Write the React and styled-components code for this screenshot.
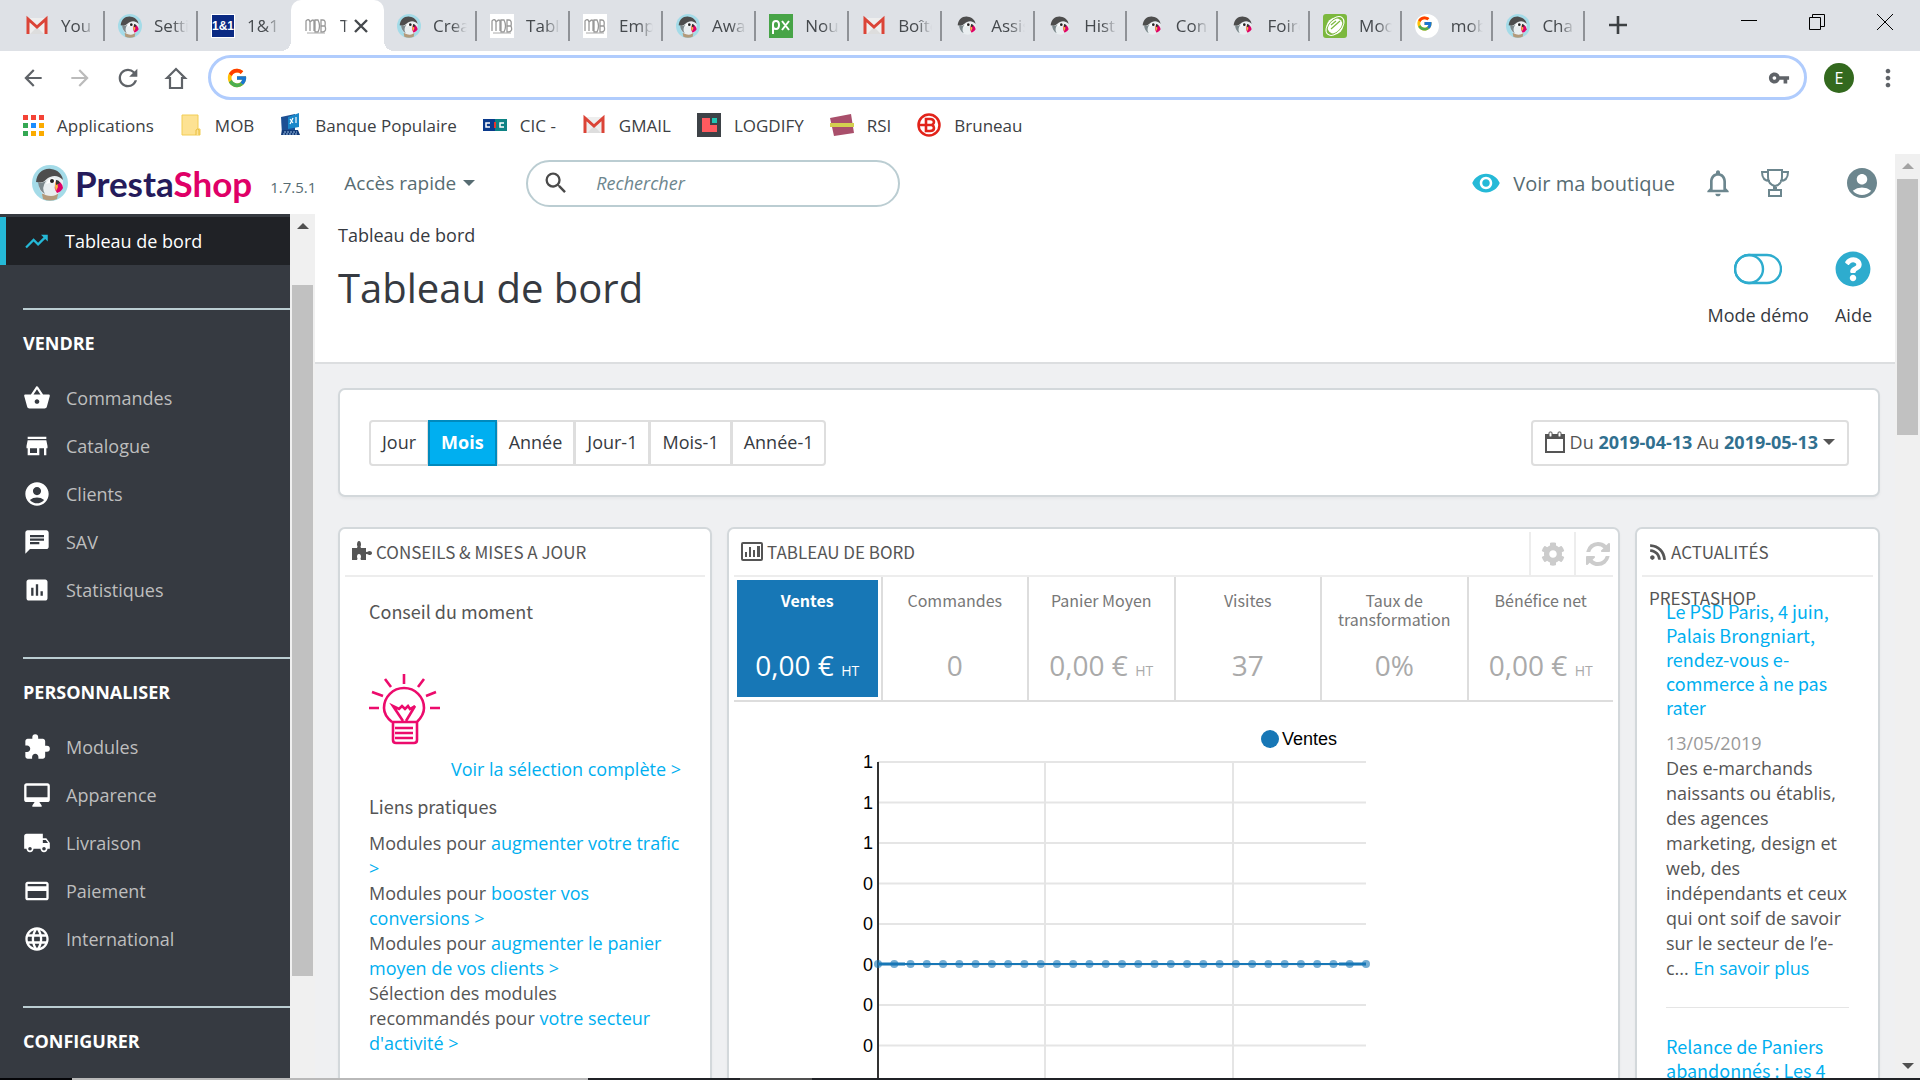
import React from 'react';
import styled, { createGlobalStyle, css } from 'styled-components';
import {
  MdTrendingUp, MdShoppingBasket, MdStore, MdAccountCircle, MdChat, MdAssessment,
  MdExtension, MdLocalShipping, MdPayment, MdLanguage, MdVisibility,
  MdNotificationsNone, MdVpnKey, MdSearch, MdArrowBack, MdArrowForward, MdRefresh, MdMoreVert,
} from 'react-icons/md';
import { FaQuestionCircle, FaCog, FaRss } from 'react-icons/fa';
import { FcGoogle } from 'react-icons/fc';

const sans = '"Open Sans", "Noto Sans", sans-serif';
const condensed = '"Ubuntu Condensed", "Noto Sans CJK SC", sans-serif';

const GlobalStyle = createGlobalStyle`
  * { box-sizing: border-box; }

  body {
    margin: 0;
    font-family: ${sans};
    font-size: 17px;
    color: #363a41;
    background: #fff;
  }

  button, input { font-family: inherit; font-size: inherit; color: inherit; }

  button {
    background: none;
    border: 0;
    padding: 0;
    cursor: pointer;
  }

  a { color: #00aff0; text-decoration: none; }

  h1, h2, h3, p, ul { margin: 0; padding: 0; font-weight: normal; }

  ul { list-style: none; }

  svg { display: block; flex: none; }
`;

const Shell = styled.div`
  height: 100vh;
  display: flex;
  flex-direction: column;
  overflow: hidden;
`;

/* browser window */

const TabStrip = styled.div`
  display: flex;
  height: 51px;
  flex: none;
  padding-left: 12px;
  background: #dee1e6;
`;

const Tabs = styled.div`
  flex: 1;
  min-width: 0;
  display: flex;
`;

const Tab = styled.button`
  position: relative;
  flex: 50 1 0;
  min-width: 0;
  display: flex;
  align-items: center;
  gap: 12px;
  padding: 0 10px 0 13px;
  color: #45494d;

  &:nth-child(-n + 11) { flex-grow: 51; }

  &::after {
    content: '';
    position: absolute;
    right: 0;
    top: 11px;
    width: 2px;
    height: 30px;
    background: #8f9297;
    display: ${p => (p.$quiet ? 'none' : 'block')};
  }

  ${p => p.$active && css`
    background: #fff;
    border-radius: 10px 10px 0 0;

    &::before, &::after {
      content: '';
      display: block;
      position: absolute;
      top: auto;
      bottom: 0;
      width: 10px;
      height: 10px;
    }

    &::before {
      left: -10px;
      background: radial-gradient(circle at 0 0, #dee1e6 10px, #fff 10px);
    }

    &::after {
      right: -10px;
      background: radial-gradient(circle at 100% 0, #dee1e6 10px, #fff 10px);
    }
  `}
`;

const TabTitle = styled.span`
  flex: 1;
  min-width: 0;
  overflow: hidden;
  white-space: nowrap;
  text-align: left;
  mask-image: linear-gradient(to right, #000 55%, transparent);
`;

const CloseIcon = styled.svg`
  margin: 0 6px 0 -6px;
`;

const WindowButtons = styled.div`
  width: 335px;
  flex: none;
  display: flex;
  justify-content: space-between;
  align-items: flex-start;
  padding: 14px 27px 0 22px;
  color: #3c4043;
`;

const WindowControls = styled.div`
  display: flex;
  gap: 52px;
`;

const Toolbar = styled.div`
  flex: none;
  height: 53px;
  display: flex;
  align-items: center;
  padding: 4px 18px 4px 20px;
  color: #5f6368;
`;

const NavButtons = styled.div`
  display: flex;
  gap: 21px;
  margin-right: 19px;
`;

const Omnibox = styled.label`
  flex: 1;
  height: 45px;
  display: flex;
  align-items: center;
  padding: 0 14px 0 15px;
  border: 3px solid #b0ccfd;
  border-radius: 23px;

  input {
    flex: 1;
    border: 0;
    outline: 0;
    background: none;
  }
`;

const Profile = styled.button`
  width: 30px;
  height: 30px;
  margin: 0 20px 0 17px;
  border-radius: 50%;
  background: #33691e;
  color: #fff;
  font-size: 16px;
`;

const Bookmarks = styled.nav`
  flex: none;
  height: 50px;
  display: flex;
  align-items: center;
  gap: 26px;
  padding: 0 22px 8px;

  a {
    display: flex;
    align-items: center;
    gap: 13px;
    font-size: 17px;
    color: #3c4043;
  }
`;

const Viewport = styled.div`
  flex: 1;
  min-height: 0;
  display: flex;
`;

const Page = styled.div`
  flex: 1;
  min-width: 0;
  display: flex;
  flex-direction: column;
`;

const Track = styled.div`
  width: 25px;
  flex: none;
  display: flex;
  flex-direction: column;
  align-items: center;
  background: #f0f0f0;
`;

const Arrow = styled.i`
  margin: 9px 0;
  border: 6px solid transparent;
  border-top-width: 0;
  border-bottom-color: ${p => (p.$muted ? '#a3a3a3' : '#505050')};

  ${p => p.$down && css`
    margin-top: auto;
    border-width: 6px 6px 0;
    border-color: #505050 transparent transparent;
  `}
`;

const Thumb = styled.div`
  width: 21px;
  height: ${p => p.$height};
  margin-top: ${p => p.$top}px;
  background: #c1c1c1;
`;

const Taskbar = styled.div`
  flex: none;
  height: 2px;
  background: linear-gradient(to right, #050508 72px, #b9b9b9 72px 588px, #202226 588px 740px, #505050 740px 812px, #202226 812px);
`;

/* back office header */

const Header = styled.header`
  flex: none;
  height: 60px;
  display: flex;
  align-items: center;
  padding: 0 15px 2px 32px;
  color: #576c72;
  font-size: 18px;
`;

const Logo = styled.a`
  display: flex;
  align-items: center;
  gap: 7px;
  font: bold 35px/40px Lato, sans-serif;
  color: #251b5b;

  em {
    font-style: normal;
    color: #df0067;
  }
`;

const Version = styled.span`
  margin: 8px 28px 0 18px;
  font-size: 15px;
`;

const QuickAccess = styled.button`
  display: flex;
  align-items: center;
  gap: 7px;
  margin-right: 51px;
  font-size: 19px;
`;

const Caret = styled.i`
  border: 6px solid transparent;
  border-top-color: currentColor;
  border-bottom: 0;
`;

const Search = styled.label`
  width: 374px;
  height: 47px;
  display: flex;
  align-items: center;
  gap: 24px;
  padding: 0 14px;
  border: 2px solid #bbcdd2;
  border-radius: 24px;
  color: #4a4a4a;

  input {
    flex: 1;
    min-width: 0;
    border: 0;
    outline: 0;
    background: none;
    font-size: 18px;
    font-style: italic;
  }

  input::placeholder { color: #6c868e; opacity: 1; }
`;

const HeaderActions = styled.div`
  margin-left: auto;
  display: flex;
  align-items: center;
  color: #6c868e;

  a {
    display: flex;
    align-items: center;
    gap: 12px;
    margin-right: 27px;
    font-size: 20px;
    color: #576c72;
  }
`;

const ActionButton = styled.button`
  margin-right: ${p => p.$space || 0}px;
`;

/* sidebar */

const Body = styled.div`
  flex: 1;
  min-height: 0;
  display: flex;
`;

const Sidebar = styled.nav`
  width: 290px;
  flex: none;
  overflow: hidden;
  padding-top: 3px;
  background: #363a41;
`;

const MenuGroup = styled.div`
  margin-top: 43px;

  h2 {
    margin-left: 23px;
    padding: 21px 0 19px;
    border-top: 2px solid #bbcdd2;
    font-size: 18px;
    line-height: 24px;
    font-weight: bold;
    color: #fff;
    white-space: nowrap;
  }
`;

const MenuLink = styled.a`
  display: flex;
  align-items: center;
  gap: 15px;
  height: 48px;
  padding-left: 23px;
  font-size: 18px;
  color: #bebebe;

  svg { color: #fff; }

  ${p => p.$active && css`
    border-left: 6px solid #25b9d7;
    padding-left: 17px;
    background: #202226;
    color: #fff;

    svg { color: #25b9d7; }
  `}
`;

/* content */

const Main = styled.main`
  flex: 1;
  min-width: 0;
  display: flex;
  flex-direction: column;
  overflow: hidden;
  background: #eff0f2;
`;

const PageHead = styled.div`
  flex: none;
  height: 150px;
  display: flex;
  justify-content: space-between;
  padding: 9px 23px 0 23px;
  background: #fff;
  border-bottom: 2px solid #dcdee0;

  nav {
    font-size: 18px;
    line-height: 24px;
  }

  h1 {
    margin-top: 14px;
    font-size: 40px;
    line-height: 54px;
  }
`;

const HeadButtons = styled.div`
  display: flex;
  align-items: flex-start;
  gap: 26px;
  padding-top: 28px;
`;

const HeadButton = styled.button`
  display: flex;
  flex-direction: column;
  align-items: center;
  gap: 16px;
  font-size: 18px;
  line-height: 24px;

  svg { color: #2eacce; }
`;

const Content = styled.div`
  flex: 1;
  min-height: 0;
  padding: 24px 15px 0 23px;
`;

const Card = styled.section`
  background: #fff;
  border: 2px solid #d3d8db;
  border-radius: 7px;
  box-shadow: 0 2px 3px rgba(0, 0, 0, 0.04);
`;

const FilterCard = styled(Card)`
  display: flex;
  justify-content: space-between;
  padding: 30px 29px 29px;
  margin-bottom: 30px;
`;

const Periods = styled.div`
  display: flex;
`;

const Period = styled.button`
  height: 46px;
  padding: 0 11px 2px;
  border: 2px solid #dedede;
  margin-left: -1px;
  font-size: 18px;
  color: #363a41;

  &:first-child { margin-left: 0; border-radius: 4px 0 0 4px; }
  &:last-child { border-radius: 0 4px 4px 0; }

  ${p => p.$active && css`
    position: relative;
    background: #00aff0;
    border-color: #008abd;
    color: #fff;
    font-weight: bold;
  `}
`;

const DateButton = styled.button`
  display: flex;
  align-items: center;
  gap: 5px;
  height: 46px;
  padding: 0 12px 2px;
  border: 2px solid #dedede;
  border-radius: 4px;
  font-size: 18px;
  color: #555;
  white-space: nowrap;

  strong { font-weight: bold; color: #31708f; }
`;

const Columns = styled.div`
  display: grid;
  grid-template-columns: 374fr 893fr 245fr;
  gap: 15px;
`;

const Panel = styled(Card)`
  min-width: 0;
  height: 640px;
  padding: 0 5px;
  overflow: hidden;
`;

const PanelHeading = styled.h3`
  display: flex;
  justify-content: space-between;
  height: 48px;
  border-bottom: 2px solid #ededed;
  padding-left: 7px;
  font-family: ${condensed};
  font-size: 17px;
  line-height: 46px;
  color: #555;
  white-space: nowrap;
`;

const HeadingText = styled.span`
  svg {
    display: inline-block;
    margin-right: 4px;
    vertical-align: -2px;
  }
`;

const PanelTools = styled.span`
  display: flex;
  margin-top: 3px;

  button {
    width: 45px;
    height: 43px;
    padding-left: 10px;
    border-left: 2px solid #ededed;
    color: #ccc;
  }

  button:last-child { width: 39px; }
`;

const Tips = styled.div`
  padding: 22px 24px;
  font-size: 18px;
  line-height: 25px;
  color: #555;

  h3 {
    font-family: ${condensed};
    font-size: 18px;
    line-height: 24px;
  }

  > svg { margin: 51px 0 12px; }

  ul { margin-top: 13px; }
`;

const SeeAll = styled.p`
  margin-bottom: 12px;
  text-align: right;
`;

const Kpis = styled.div`
  display: grid;
  grid-template-columns: repeat(6, 1fr);
  border-bottom: 2px solid #ddd;
`;

const Kpi = styled.button`
  height: 123px;
  display: flex;
  flex-direction: column;
  justify-content: space-between;
  align-items: center;
  padding: 14px 8px 16px;
  border-left: 2px solid #ddd;
  color: #777;

  span {
    font-family: ${condensed};
    font-size: 16px;
    line-height: 19px;
  }

  b {
    font-size: 28px;
    line-height: 38px;
    font-weight: normal;
    color: #aaa;
    white-space: nowrap;
  }

  small { font-size: 14px; line-height: 14px; }

  ${p => p.$active && css`
    background: #1777b6;
    border: 3px solid #fff;
    padding: 11px 4px 13px;
    color: #fff;

    span { font-weight: bold; }
    b { color: #fff; }
  `}
`;

const News = styled.div`
  padding: 22px 24px;
  font-size: 18px;
  line-height: 25px;
  color: #555;

  h3 {
    font-family: ${condensed};
    font-size: 18px;
    line-height: 24px;
    margin-bottom: 12px;
  }

  time { display: block; color: #999; }

  hr {
    margin: 26px 0;
    border: 0;
    border-top: 1px solid #e5e5e5;
  }
`;

const Puffin = ({ size = 24, round }) => (
  <svg width={size} height={size} viewBox="0 0 36 36">
    {round && <circle cx="18" cy="18" r="18" fill="#a4dbe8" />}
    {round && <path d="M10 29q8-5 16 0l-1 5q-7 3-14 0z" fill="#b39a7b" />}
    <path d="M7 20C7 10 12 5 19 5s12 5 12 12c0 8-5 14-12 14S7 27 7 20z" fill="#e9eef0" />
    <path d="M4 17C5 8 11 3 19 4c7 1 11 5 12 11-4-4-8-5-13-3-3 1-5 4-7 5-3 1-5 0-7 0z" fill="#4d4d4d" />
    <path d="M6 17q3 2 8-1-5 7-1 13-6-3-7-12z" fill="#7d898d" />
    <path d="M14 19q2-6 8-6l2 5q-5-1-10 1z" fill="#fff" />
    <circle cx="20" cy="16" r="2" fill="#222" />
    <path d="M24 16q6 0 7 7-2 4-6 5-4-5-1-12z" fill="#df0067" />
    <path d="M24 16q-2 5 0 10l2-4-1-6z" fill="#f5b942" />
    <path d="M24 15q3 0 4 3l-4 2z" fill="#333" />
  </svg>
);

const Gmail = () => (
  <svg width="24" height="24" viewBox="0 0 24 24">
    <path d="M2 4h20v16H2z" fill="#eee" />
    <path d="M5 20l7-7 7 7z" fill="#ddd" />
    <path d="M3 20V5l9 8 9-8v15" fill="none" stroke="#db4437" strokeWidth="3" />
  </svg>
);

const OneAndOne = () => (
  <svg width="24" height="24" viewBox="0 0 24 24">
    <path d="M0 0h24v24H0z" fill="#fff" />
    <path d="M1 1h22v22H1z" fill="#0b2a83" />
    <text x="12" y="16" fontSize="12" fontWeight="bold" fontFamily="Liberation Sans" textAnchor="middle" fill="#fff">1&amp;1</text>
  </svg>
);

const Mob = ({ plain }) => (
  <svg width="24" height="24" viewBox="0 0 24 24">
    {!plain && <path d="M0 0h24v24H0z" fill="#fff" />}
    <path d="M2 17V7q3-3 4 1v9m0-9q4-4 4 0v9M11 6v12h3q3-6 0-12zM17 6v12h2q4-1 2-6 1-6-2-6zm0 6h4" fill="none" stroke="#999" strokeWidth="1.3" />
    <path d="M3 19h18" stroke="#aaa" />
  </svg>
);

const Px = () => (
  <svg width="24" height="24" viewBox="0 0 24 24">
    <path d="M0 0h24v24H0z" fill="#47a447" />
    <path d="M4 20V10q0-3 3-3t3 4-3 4q-3 0-3-3M13 7l7 9m0-9l-7 9" fill="none" stroke="#fff" strokeWidth="2" />
  </svg>
);

const Planet = () => (
  <svg width="24" height="24" viewBox="0 0 24 24">
    <rect width="24" height="24" rx="3" fill="#7cb83e" />
    <circle cx="12" cy="12" r="8" fill="#fff" />
    <path d="M8 15l9-8M8 11l5-4" fill="none" stroke="#7cb83e" strokeWidth="1.2" />
    <ellipse cx="12" cy="12" rx="10" ry="6" transform="rotate(-48 12 12)" fill="none" stroke="#7cb83e" />
    <ellipse cx="12" cy="12" rx="11" ry="7" transform="rotate(-48 12 12)" fill="none" stroke="#fff" />
  </svg>
);

const GoogleTab = () => (
  <svg width="24" height="24" viewBox="0 0 24 24">
    <circle cx="12" cy="12" r="12" fill="#fff" />
    <FcGoogle x="1" y="1" width="22" height="22" />
  </svg>
);

const AppsIcon = () => {
  const colors = ['#f44336', '#f44336', '#f44336', '#34a853', '#1a8cff', '#fbab00', '#34a853', '#fbab00', '#fbab00'];
  return (
    <svg width="22" height="22" viewBox="0 0 22 22">
      {colors.map((color, i) => (
        <rect key={i} x={1 + (i % 3) * 8} y={1 + Math.floor(i / 3) * 8} width="5" height="5" fill={color} />
      ))}
    </svg>
  );
};

const FolderIcon = () => (
  <svg width="22" height="22" viewBox="0 0 22 22">
    <path d="M2 1h16v14h2v6H2z" fill="#fde293" stroke="#f2cd54" />
    <path d="M16 21v-5q2-2 3 0v5" fill="#fde293" stroke="#e8bd3d" />
  </svg>
);

const BankIcon = () => (
  <svg width="22" height="24" viewBox="0 0 22 24">
    <path d="M1 4l14-3v20l-13 1z" fill="#1c4f93" />
    <path d="M8 4l11-4v14l-11 2z" fill="#1b87c9" />
    <path d="M10 6l3 4M13 5l-3 6M16 4v6" stroke="#fff" strokeWidth="1.2" />
    <path d="M2 17h16l2 5H1z" fill="#113a78" />
    <path d="M4 19h13M3 21h15" stroke="#9fc0e4" strokeDasharray="2 1" />
  </svg>
);

const CicIcon = () => (
  <svg width="24" height="12" viewBox="0 0 24 12">
    <path d="M0 0h12v12H0z" fill="#0a3a8c" />
    <path d="M12 0h12v12H12z" fill="#0e8284" />
    <path d="M7 4H3v4h4M21 4h-4v4h4" fill="none" stroke="#fff" strokeWidth="1.5" />
    <path d="M11 3h2v6h-2z" fill="#e5352c" />
  </svg>
);

const LogdifyIcon = () => (
  <svg width="24" height="24" viewBox="0 0 24 24">
    <path d="M0 0h24v24H0z" fill="#3d4247" />
    <path d="M5 5h8v7h7v7H5z" fill="#ff5a5f" />
    <path d="M15 5h5v5h-5z" fill="#1fc8b4" />
  </svg>
);

const RsiIcon = () => (
  <svg width="24" height="22" viewBox="0 0 24 22">
    <path d="M0 4l21-4 3 19-20 3z" fill="#a94f6b" />
    <path d="M0 9h24v4H0z" fill="#d3d04f" />
  </svg>
);

const BruneauIcon = () => (
  <svg width="24" height="24" viewBox="0 0 24 24">
    <circle cx="12" cy="12" r="10.5" fill="none" stroke="#e2231a" strokeWidth="2.5" />
    <path d="M1 12h8M9 6v12h4q4 0 4-3 0-2-2-3 2-1 2-3 0-3-4-3zM9 12h6" fill="none" stroke="#e2231a" strokeWidth="2.6" />
  </svg>
);

const HomeIcon = () => (
  <svg width="26" height="26" viewBox="0 0 26 26">
    <path d="M4 13L13 4l9 9h-3v10H7V13z" fill="none" stroke="#5f6368" strokeWidth="2.2" />
  </svg>
);

const DesktopIcon = ({ size }) => (
  <svg width={size} height={size} viewBox="0 0 24 24" fill="currentColor">
    <path d="M21 2H3c-1.100 0-2 .9-2 2v12c0 1.100.9 2 2 2h7l-2 3v1h8v-1l-2-3h7c1.100 0 2-.9 2-2V4c0-1.100-.9-2-2-2zm0 12H3V4h18v10z" />
  </svg>
);

const TrophyIcon = () => (
  <svg width="28" height="28" viewBox="0 0 28 28" fill="none" stroke="#6c868e" strokeWidth="2">
    <path d="M7 1h14v7c0 5-3 8-7 9-4-1-7-4-7-9zM7 3H1c0 6 3 9 8 9M21 3h6c0 6-3 9-8 9M13 17v5M15 17v5M8 21h12v6H8z" />
  </svg>
);

const ToggleIcon = () => (
  <svg width="48" height="36" viewBox="0 0 48 36" fill="none" stroke="#2eacce" strokeWidth="2.4">
    <rect x="1" y="4" width="46" height="28" rx="14" />
    <circle cx="15" cy="18" r="14" />
  </svg>
);

const PuzzleIcon = () => (
  <svg width="20" height="20" viewBox="0 0 20 20" fill="#555">
    <path d="M0 7h5q1-1 0-3 0-4 2-4t2 4q-1 2 0 3h5v4q2 0 3-1 3 0 3 2t-3 2q-1-1-3-1v6h-5q-1-1 0-3 0-3-2-3t-2 3q1 2 0 3H0z" />
  </svg>
);

const BarsIcon = () => (
  <svg width="22" height="19" viewBox="0 0 22 19">
    <rect x="1" y="1" width="20" height="17" rx="1" fill="none" stroke="#555" strokeWidth="2" />
    <path d="M4 10h2v5H4zM8 5h2v10H8zM12 8h2v7h-2zM16 4h3v11h-3z" fill="#555" />
  </svg>
);

const CalendarIcon = () => (
  <svg width="20" height="22" viewBox="0 0 20 22">
    <path d="M1 5h18v16H1z" fill="none" stroke="#555" strokeWidth="2" />
    <path d="M0 3h20v5H0z" fill="#555" />
    <rect x="4" y="1" width="3" height="5" rx="1" fill="#fff" stroke="#555" />
    <rect x="13" y="1" width="3" height="5" rx="1" fill="#fff" stroke="#555" />
  </svg>
);

const RefreshIcon = () => (
  <svg width="24" height="24" viewBox="0 0 1536 1536" fill="currentColor">
    <path d="M1511 928q0 5-1 7-64 268-268 434.500t-478 166.500q-146 0-282.500-55t-243.500-157l-129 129q-19 19-45 19t-45-19-19-45v-448q0-26 19-45t45-19h448q26 0 45 19t19 45-19 45l-137 137q71 66 161 102t187 36q134 0 250-65t186-179q11-17 53-117 8-23 30-23h192q13 0 22.500 9.500t9.500 22.500zm25-800v448q0 26-19 45t-45 19h-448q-26 0-45-19t-19-45 19-45l138-138q-148-137-349-137-134 0-250 65t-186 179q-11 17-53 117-8 23-30 23h-199q-13 0-22.500-9.500t-9.500-22.500v-7q65-268 270-434.500t480-166.500q146 0 284 55.500t245 156.500l130-129q19-19 45-19t45 19 19 45z" />
  </svg>
);

const BulbIcon = () => (
  <svg width="71" height="71" viewBox="0 0 71 71" fill="none" stroke="#ec0b6c" strokeWidth="2.6">
    <path d="M23 48c-5-4-8-8-8-14a20 20 0 0 1 40 0c0 6-3 10-7 14M24 48h24v18q0 3-3 3H27q-3 0-3-3z" />
    <path d="M26 54h18M26 59h18M26 64h18" />
    <path d="M34 47L24 32l6 3 3-3 3 3 3-3 2 3 5-3-9 15" />
    <path d="M35 0v10M16 5l6 8M55 5l-6 8M3 18l11 4M67 18l-10 4M0 34h10M61 34h10" />
  </svg>
);

const yLabels = ['1', '1', '1', '0', '0', '0', '0', '0'];

const Chart = () => (
  <svg width="640" height="378" viewBox="0 0 640 378" fontFamily="Liberation Sans" fontSize="18">
    <circle cx="536" cy="37" r="9" fill="#1777b6" />
    <text x="548" y="43">Ventes</text>
    {yLabels.map((label, i) => (
      <g key={i}>
        <path d={`M144 ${60 + i * 40.5}h488`} stroke="#e5e5e5" strokeWidth="2" />
        <text x="139" y={66 + i * 40.5} textAnchor="end">{label}</text>
      </g>
    ))}
    <path d="M311 60v318M499 60v318" stroke="#e5e5e5" strokeWidth="2" />
    <path d="M144 60v318" stroke="#333" strokeWidth="2" />
    <path d="M144 262h488" stroke="#1777b6" strokeWidth="2" />
    <path d="M144 262h27M605 262h27" stroke="#1777b6" strokeWidth="3" />
    {Array.from({ length: 31 }, (_, i) => (
      <circle key={i} cx={144 + (i * 488) / 30} cy="262" r="4" fill="#1777b6" fillOpacity="0.6" />
    ))}
  </svg>
);

const tabs = [
  { title: 'You', icon: <Gmail /> },
  { title: 'Setti', icon: <Puffin round /> },
  { title: '1&1', icon: <OneAndOne />, quiet: true },
  { title: 'T', icon: <Mob plain />, active: true },
  { title: 'Crea', icon: <Puffin round /> },
  { title: 'Table', icon: <Mob /> },
  { title: 'Emp', icon: <Mob /> },
  { title: 'Awa', icon: <Puffin round /> },
  { title: 'Nou', icon: <Px /> },
  { title: 'Boîte', icon: <Gmail /> },
  { title: 'Assis', icon: <Puffin /> },
  { title: 'Hist', icon: <Puffin /> },
  { title: 'Con', icon: <Puffin /> },
  { title: 'Foire', icon: <Puffin /> },
  { title: 'Moo', icon: <Planet /> },
  { title: 'mob', icon: <GoogleTab /> },
  { title: 'Cha', icon: <Puffin round /> },
];

const bookmarks = [
  { name: 'Applications', icon: <AppsIcon /> },
  { name: 'MOB', icon: <FolderIcon /> },
  { name: 'Banque Populaire', icon: <BankIcon /> },
  { name: 'CIC -', icon: <CicIcon /> },
  { name: 'GMAIL', icon: <Gmail /> },
  { name: 'LOGDIFY', icon: <LogdifyIcon /> },
  { name: 'RSI', icon: <RsiIcon /> },
  { name: 'Bruneau', icon: <BruneauIcon /> },
];

const menu = [
  {
    title: 'VENDRE',
    items: [
      ['Commandes', MdShoppingBasket],
      ['Catalogue', MdStore],
      ['Clients', MdAccountCircle],
      ['SAV', MdChat],
      ['Statistiques', MdAssessment],
    ],
  },
  {
    title: 'PERSONNALISER',
    items: [
      ['Modules', MdExtension],
      ['Apparence', DesktopIcon],
      ['Livraison', MdLocalShipping],
      ['Paiement', MdPayment],
      ['International', MdLanguage],
    ],
  },
  { title: 'CONFIGURER', items: [] },
];

const periods = ['Jour', 'Mois', 'Année', 'Jour-1', 'Mois-1', 'Année-1'];

const kpis = [
  { label: 'Ventes', value: '0,00 €', ht: true },
  { label: 'Commandes', value: '0' },
  { label: 'Panier Moyen', value: '0,00 €', ht: true },
  { label: 'Visites', value: '37' },
  { label: 'Taux de transformation', value: '0%' },
  { label: 'Bénéfice net', value: '0,00 €', ht: true },
];

const BrowserChrome = () => (
  <>
    <TabStrip>
      <Tabs role="tablist">
        {tabs.map(tab => (
          <Tab key={tab.title} role="tab" $active={tab.active} $quiet={tab.quiet}>
            {tab.icon}
            <TabTitle>{tab.title}</TabTitle>
            {tab.active && (
              <CloseIcon width="14" height="14" viewBox="0 0 14 14">
                <path d="M1 1l12 12M13 1L1 13" stroke="#45494d" strokeWidth="2.4" />
              </CloseIcon>
            )}
          </Tab>
        ))}
      </Tabs>
      <WindowButtons>
        <button aria-label="Nouvel onglet">
          <svg width="22" height="22" viewBox="0 0 22 22">
            <path d="M11 2v18M2 11h18" stroke="#3c4043" strokeWidth="2.6" />
          </svg>
        </button>
        <WindowControls>
          <button aria-label="Réduire">
            <svg width="16" height="16" viewBox="0 0 16 16"><path d="M0 6.5h16" stroke="#000" /></svg>
          </button>
          <button aria-label="Restaurer">
            <svg width="16" height="16" viewBox="0 0 16 16">
              <path d="M.5 3.5h11v12H.5zM3.5 3V.5h12v12H12" fill="none" stroke="#000" />
            </svg>
          </button>
          <button aria-label="Fermer">
            <svg width="16" height="16" viewBox="0 0 16 16"><path d="M0 0l16 16M16 0L0 16" stroke="#000" /></svg>
          </button>
        </WindowControls>
      </WindowButtons>
    </TabStrip>
    <Toolbar>
      <NavButtons>
        <button aria-label="Précédent"><MdArrowBack size={26} /></button>
        <button aria-label="Suivant"><MdArrowForward size={26} color="#bbb" /></button>
        <button aria-label="Actualiser"><MdRefresh size={28} /></button>
        <button aria-label="Accueil"><HomeIcon /></button>
      </NavButtons>
      <Omnibox>
        <FcGoogle size={22} />
        <input type="text" aria-label="Adresse" />
        <MdVpnKey size={22} />
      </Omnibox>
      <Profile>E</Profile>
      <button aria-label="Menu"><MdMoreVert size={28} /></button>
    </Toolbar>
    <Bookmarks>
      {bookmarks.map(b => <a key={b.name} href="#">{b.icon}{b.name}</a>)}
    </Bookmarks>
  </>
);

const TopBar = () => (
  <Header>
    <Logo href="#"><Puffin size={36} round /><span>Presta<em>Shop</em></span></Logo>
    <Version>1.7.5.1</Version>
    <QuickAccess>Accès rapide <Caret /></QuickAccess>
    <Search>
      <MdSearch size={28} />
      <input type="text" placeholder="Rechercher" aria-label="Rechercher" />
    </Search>
    <HeaderActions>
      <a href="#"><MdVisibility size={30} color="#25b9d7" />Voir ma boutique</a>
      <ActionButton $space={27} aria-label="Notifications"><MdNotificationsNone size={32} /></ActionButton>
      <ActionButton $space={55} aria-label="Trophées"><TrophyIcon /></ActionButton>
      <ActionButton aria-label="Compte"><MdAccountCircle size={36} /></ActionButton>
    </HeaderActions>
  </Header>
);

const SideMenu = () => (
  <>
    <Sidebar>
      <MenuLink href="#" $active><MdTrendingUp size={27} />Tableau de bord</MenuLink>
      {menu.map(group => (
        <MenuGroup key={group.title}>
          <h2>{group.title}</h2>
          {group.items.map(([name, Icon]) => (
            <MenuLink key={name} href="#"><Icon size={28} />{name}</MenuLink>
          ))}
        </MenuGroup>
      ))}
    </Sidebar>
    <Track>
      <Arrow />
      <Thumb $top={47} $height="80%" />
    </Track>
  </>
);

const TipsPanel = () => (
  <Panel>
    <PanelHeading>
      <HeadingText><PuzzleIcon />CONSEILS &amp; MISES A JOUR</HeadingText>
    </PanelHeading>
    <Tips>
      <h3>Conseil du moment</h3>
      <BulbIcon />
      <SeeAll><a href="#">Voir la sélection complète &gt;</a></SeeAll>
      <h3>Liens pratiques</h3>
      <ul>
        <li>Modules pour <a href="#">augmenter votre trafic &gt;</a></li>
        <li>Modules pour <a href="#">booster vos conversions &gt;</a></li>
        <li>Modules pour <a href="#">augmenter le panier moyen de vos clients &gt;</a></li>
        <li>Sélection des modules recommandés pour <a href="#">votre secteur d'activité &gt;</a></li>
      </ul>
    </Tips>
  </Panel>
);

const DashboardPanel = () => (
  <Panel>
    <PanelHeading>
      <HeadingText><BarsIcon />TABLEAU DE BORD</HeadingText>
      <PanelTools>
        <button aria-label="Configurer"><FaCog size={24} /></button>
        <button aria-label="Rafraîchir"><RefreshIcon /></button>
      </PanelTools>
    </PanelHeading>
    <Kpis>
      {kpis.map((kpi, i) => (
        <Kpi key={kpi.label} $active={i === 0}>
          <span>{kpi.label}</span>
          <b>{kpi.value} {kpi.ht && <small>HT</small>}</b>
        </Kpi>
      ))}
    </Kpis>
    <Chart />
  </Panel>
);

const NewsPanel = () => (
  <Panel>
    <PanelHeading>
      <HeadingText><FaRss size={18} />ACTUALITÉS<br />PRESTASHOP</HeadingText>
    </PanelHeading>
    <News>
      <h3><a href="#">Le PSD Paris, 4 juin, Palais Brongniart, rendez-vous e-commerce à ne pas rater</a></h3>
      <time>13/05/2019</time>
      <p>
        Des e-marchands naissants ou établis, des agences marketing, design et web, des
        indépendants et ceux qui ont soif de savoir sur le secteur de l’e-c... <a href="#">En savoir plus</a>
      </p>
      <hr />
      <h3><a href="#">Relance de Paniers abandonnés : Les 4</a></h3>
    </News>
  </Panel>
);

const App = () => (
  <Shell>
    <GlobalStyle />
    <BrowserChrome />
    <Viewport>
      <Page>
        <TopBar />
        <Body>
          <SideMenu />
          <Main>
            <PageHead>
              <div>
                <nav>Tableau de bord</nav>
                <h1>Tableau de bord</h1>
              </div>
              <HeadButtons>
                <HeadButton><ToggleIcon />Mode démo</HeadButton>
                <HeadButton><FaQuestionCircle size={36} />Aide</HeadButton>
              </HeadButtons>
            </PageHead>
            <Content>
              <FilterCard>
                <Periods>
                  {periods.map(name => <Period key={name} $active={name === 'Mois'}>{name}</Period>)}
                </Periods>
                <DateButton>
                  <CalendarIcon />
                  <span>Du <strong>2019-04-13</strong> Au <strong>2019-05-13</strong></span>
                  <Caret />
                </DateButton>
              </FilterCard>
              <Columns>
                <TipsPanel />
                <DashboardPanel />
                <NewsPanel />
              </Columns>
            </Content>
          </Main>
        </Body>
      </Page>
      <Track>
        <Arrow $muted />
        <Thumb $top={1} $height="256px" />
        <Arrow $down />
      </Track>
    </Viewport>
    <Taskbar />
  </Shell>
);

export default App;
